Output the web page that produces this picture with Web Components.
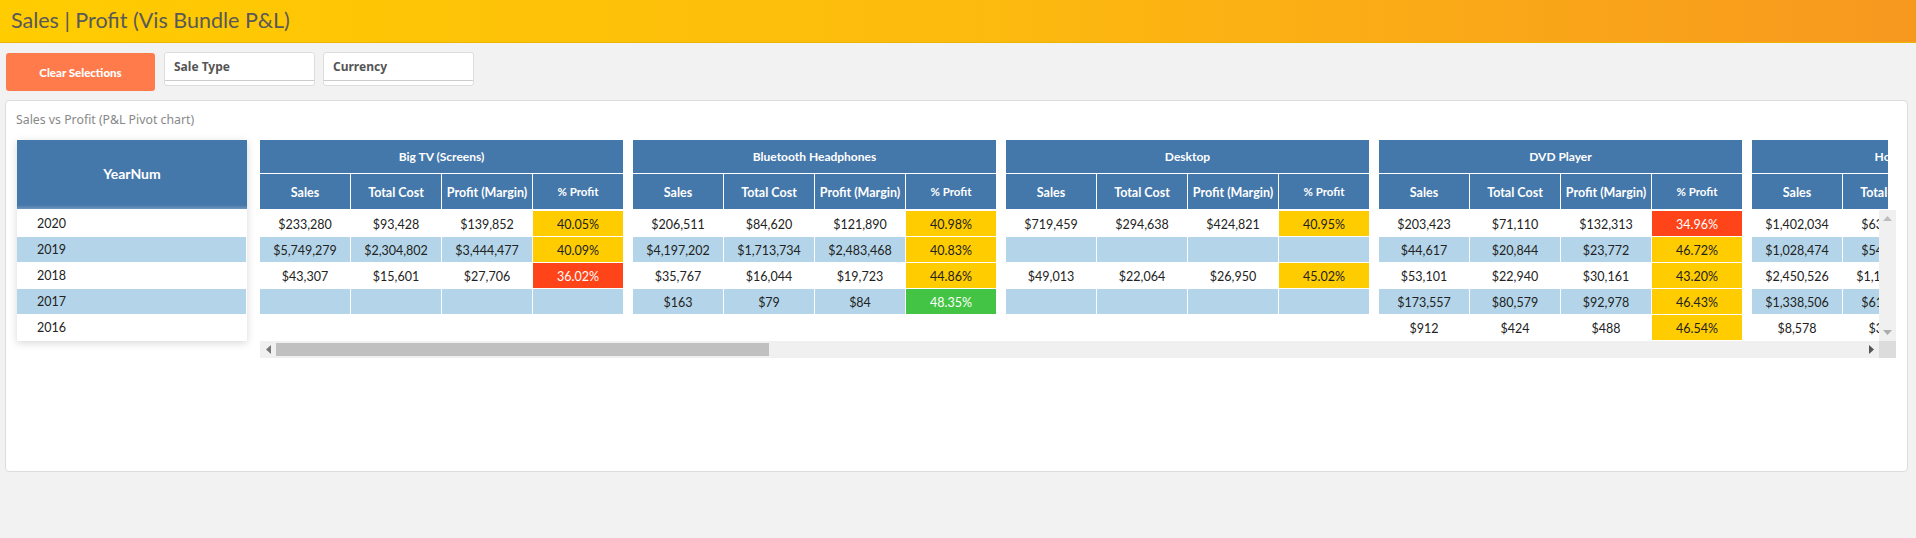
<!DOCTYPE html>
<html>
<head>
<meta charset="utf-8">
<title>Sales | Profit</title>
<style>
    html, body { margin: 0; padding: 0; }
    body { background: #f2f2f2; height: 538px; overflow: hidden; font-family: "Noto Sans", sans-serif; }
</style>
</head>
<body>
<app-header>Sales | Profit (Vis Bundle P&amp;L)</app-header>
<tool-bar>
    <clear-button>Clear Selections</clear-button>
    <filter-box>Sale Type</filter-box>
    <filter-box>Currency</filter-box>
</tool-bar>
<chart-panel heading="Sales vs Profit (P&amp;L Pivot chart)">
    <pivot-chart></pivot-chart>
</chart-panel>

<script>
class AppHeader extends HTMLElement {
    constructor() {
        super();
        this.attachShadow({mode: 'open'}).innerHTML = `
            <style>
                :host {
                    display: flex;
                    align-items: center;
                    height: 43px;
                    box-sizing: border-box;
                    padding: 0 0 3px 11px;
                    background: linear-gradient(90deg, #ffcc00 0%, #fdbb0e 50%, #f7981f 100%);
                    border-bottom: 1px solid #eeb400;
                    color: #595959;
                    font: 400 21.5px Lato, sans-serif;
                }
            </style>
            <slot></slot>`;
    }
}
customElements.define('app-header', AppHeader);

class ToolBar extends HTMLElement {
    constructor() {
        super();
        this.attachShadow({mode: 'open'}).innerHTML = `
            <style>
                :host {
                    display: flex;
                    align-items: flex-start;
                    gap: 8px;
                    height: 57px;
                    box-sizing: border-box;
                    padding: 9px 0 0 6px;
                }
            </style>
            <slot></slot>`;
    }
}
customElements.define('tool-bar', ToolBar);

class ClearButton extends HTMLElement {
    constructor() {
        super();
        this.attachShadow({mode: 'open'}).innerHTML = `
            <style>
                :host {
                    display: flex;
                    align-items: center;
                    justify-content: center;
                    width: 149px;
                    height: 38px;
                    margin: 1px 1px 0 0;
                    background: #ff7b4c;
                    border-radius: 3px;
                    color: #fff;
                    font: 900 11.5px Lato, sans-serif;
                }
            </style>
            <slot></slot>`;
    }
}
customElements.define('clear-button', ClearButton);

class FilterBox extends HTMLElement {
    constructor() {
        super();
        this.attachShadow({mode: 'open'}).innerHTML = `
            <style>
                :host {
                    display: block;
                    width: 151px;
                    height: 34px;
                    box-sizing: border-box;
                    background: #fff;
                    border: 1px solid #ddd;
                    border-radius: 3px;
                }
                .label {
                    height: 28px;
                    box-sizing: border-box;
                    padding: 5px 0 0 9px;
                    border-bottom: 1px solid #ccc;
                    color: #555;
                    font: 700 12px "Noto Sans", sans-serif;
                }
            </style>
            <div class="label"><slot></slot></div>`;
    }
}
customElements.define('filter-box', FilterBox);

class ChartPanel extends HTMLElement {
    constructor() {
        super();
        this.attachShadow({mode: 'open'}).innerHTML = `
            <style>
                :host {
                    display: block;
                    width: 1903px;
                    height: 372px;
                    margin-left: 5px;
                    box-sizing: border-box;
                    padding: 0 10px 0 11px;
                    background: #fff;
                    border: 1px solid #ddd;
                    border-radius: 4px;
                }
                .heading {
                    height: 39px;
                    box-sizing: border-box;
                    padding-top: 10px;
                    margin-left: -1px;
                    color: #888;
                    font: 400 12.3px "Noto Sans", sans-serif;
                }
            </style>
            <div class="heading"></div>
            <slot></slot>`;
        this.shadowRoot.querySelector('.heading').textContent = this.getAttribute('heading');
    }
}
customElements.define('chart-panel', ChartPanel);

const pivotData = [
    {name: 'Big TV (Screens)', rows: [
        ['$233,280', '$93,428', '$139,852', '40.05%', 'y'],
        ['$5,749,279', '$2,304,802', '$3,444,477', '40.09%', 'y'],
        ['$43,307', '$15,601', '$27,706', '36.02%', 'r'],
        ['', '', '', ''],
        null
    ]},
    {name: 'Bluetooth Headphones', rows: [
        ['$206,511', '$84,620', '$121,890', '40.98%', 'y'],
        ['$4,197,202', '$1,713,734', '$2,483,468', '40.83%', 'y'],
        ['$35,767', '$16,044', '$19,723', '44.86%', 'y'],
        ['$163', '$79', '$84', '48.35%', 'g'],
        null
    ]},
    {name: 'Desktop', rows: [
        ['$719,459', '$294,638', '$424,821', '40.95%', 'y'],
        ['', '', '', ''],
        ['$49,013', '$22,064', '$26,950', '45.02%', 'y'],
        ['', '', '', ''],
        null
    ]},
    {name: 'DVD Player', rows: [
        ['$203,423', '$71,110', '$132,313', '34.96%', 'r'],
        ['$44,617', '$20,844', '$23,772', '46.72%', 'y'],
        ['$53,101', '$22,940', '$30,161', '43.20%', 'y'],
        ['$173,557', '$80,579', '$92,978', '46.43%', 'y'],
        ['$912', '$424', '$488', '46.54%', 'y']
    ]},
    {name: 'Home Theater System', rows: [
        ['$1,402,034', '$638,000', '', ''],
        ['$1,028,474', '$548,000', '', ''],
        ['$2,450,526', '$1,130,000', '', ''],
        ['$1,338,506', '$618,000', '', ''],
        ['$8,578', '$3,900', '', '']
    ]}
];

class PivotGroup extends HTMLElement {
    constructor() {
        super();
        this.attachShadow({mode: 'open'}).innerHTML = `
            <style>
                :host {
                    display: block;
                    flex: none;
                    width: 363px;
                    font-family: Lato, sans-serif;
                }
                .title {
                    display: flex;
                    align-items: center;
                    justify-content: center;
                    height: 33px;
                    margin-bottom: 1px;
                    background: #4477aa;
                    color: #fff;
                    font-size: 12px;
                    font-weight: 700;
                    white-space: nowrap;
                }
                .cols {
                    display: grid;
                    grid-template-columns: repeat(4, 90px);
                    gap: 1px;
                }
                .cols div {
                    display: flex;
                    align-items: center;
                    justify-content: center;
                    box-sizing: border-box;
                    height: 35px;
                    padding-top: 1px;
                    background: #4477aa;
                    color: #fff;
                    font-size: 12.5px;
                    font-weight: 700;
                    white-space: nowrap;
                }
                .cols div.pct {
                    font-size: 11.5px;
                    padding: 0 0 1px;
                }
            </style>
            <div class="title"></div>
            <div class="cols">
                <div>Sales</div>
                <div>Total Cost</div>
                <div>Profit (Margin)</div>
                <div class="pct">% Profit</div>
            </div>`;
    }
    set name(v) {
        this.shadowRoot.querySelector('.title').textContent = v;
    }
}
customElements.define('pivot-group', PivotGroup);

class PivotRows extends HTMLElement {
    constructor() {
        super();
        this.attachShadow({mode: 'open'}).innerHTML = `
            <style>
                :host {
                    display: grid;
                    flex: none;
                    grid-template-columns: repeat(4, 90px);
                    grid-auto-rows: 25px;
                    gap: 1px;
                    width: 363px;
                    font: 400 12.5px Lato, sans-serif;
                    color: #222;
                }
                div {
                    display: flex;
                    align-items: center;
                    justify-content: center;
                    padding-top: 1px;
                    box-sizing: border-box;
                    white-space: nowrap;
                }
                .alt { background: #b4d5e9; }
                .y { background: #ffcc00; }
                .r { background: #ff4419; color: #fff; }
                .g { background: #44c444; color: #fff; }
            </style>`;
    }
    set rows(list) {
        let html = '';
        list.forEach((row, i) => {
            const alt = i % 2 == 1;
            if (!row) {
                html += '<div></div><div></div><div></div><div></div>';
                return;
            }
            for (let c = 0; c < 4; c++) {
                let cls = alt ? 'alt' : '';
                if (c == 3 && row[4]) cls = row[4];
                html += `<div class="${cls}">${row[c]}</div>`;
            }
        });
        this.shadowRoot.innerHTML += html;
    }
}
customElements.define('pivot-rows', PivotRows);

class YearColumn extends HTMLElement {
    constructor() {
        super();
        this.attachShadow({mode: 'open'}).innerHTML = `
            <style>
                :host {
                    display: block;
                    flex: none;
                    width: 230px;
                    height: 201px;
                    background: #fff;
                    box-shadow: 0 2px 8px rgba(0, 0, 0, .16);
                    font-family: Lato, sans-serif;
                }
                .head {
                    display: flex;
                    align-items: center;
                    justify-content: center;
                    box-sizing: border-box;
                    height: 69px;
                    padding-bottom: 2px;
                    margin-bottom: 2px;
                    background: linear-gradient(180deg, #4477aa 94%, #7096bd 100%);
                    color: #fff;
                    font-size: 14px;
                    font-weight: 700;
                }
                .year {
                    height: 25px;
                    margin: 0 1px 1px 0;
                    padding-left: 20px;
                    line-height: 26px;
                    color: #222;
                    font-size: 12.5px;
                }
                .alt { background: #b4d5e9; }
            </style>
            <div class="head">YearNum</div>
            <div class="year">2020</div>
            <div class="year alt">2019</div>
            <div class="year">2018</div>
            <div class="year alt">2017</div>
            <div class="year">2016</div>`;
    }
}
customElements.define('year-column', YearColumn);

class PivotChart extends HTMLElement {
    constructor() {
        super();
        this.attachShadow({mode: 'open'}).innerHTML = `
            <style>
                :host {
                    display: flex;
                    gap: 13px;
                    align-items: flex-start;
                }
                .right { width: 1636px; }
                .heads {
                    display: flex;
                    gap: 10px;
                    width: 1628px;
                    overflow: hidden;
                    margin-bottom: 1px;
                }
                .middle {
                    display: flex;
                    height: 131px;
                }
                .bodies {
                    display: flex;
                    gap: 10px;
                    flex: 1;
                    min-width: 0;
                    overflow: hidden;
                    padding-top: 1px;
                }
                .vbar {
                    display: flex;
                    flex: none;
                    flex-direction: column;
                    align-items: center;
                    justify-content: space-between;
                    box-sizing: border-box;
                    width: 17px;
                    padding: 6px 0;
                    background: #f0f0f0;
                }
                .hbar {
                    display: flex;
                    height: 17px;
                    background: #f0f0f0;
                }
                .btn {
                    display: flex;
                    flex: none;
                    align-items: center;
                    justify-content: center;
                    width: 16px;
                }
                .thumb {
                    flex: none;
                    width: 493px;
                    height: 13px;
                    margin-top: 2px;
                    background: #c0c0c0;
                }
                .spacer { flex: 1; }
                .corner { flex: none; width: 17px; background: #dcdcdc; }
                svg { display: block; }
            </style>
            <year-column></year-column>
            <div class="right">
                <div class="heads"></div>
                <div class="middle">
                    <div class="bodies"></div>
                    <div class="vbar">
                        <svg width="9" height="5"><path d="M4.5 0L9 5H0z" fill="#bdbdbd"/></svg>
                        <svg width="9" height="5"><path d="M0 0H9L4.5 5z" fill="#adadad"/></svg>
                    </div>
                </div>
                <div class="hbar">
                    <div class="btn"><svg width="5" height="9"><path d="M5 0V9L0 4.5z" fill="#777"/></svg></div>
                    <div class="thumb"></div>
                    <div class="spacer"></div>
                    <div class="btn"><svg width="5" height="9"><path d="M0 0V9L5 4.5z" fill="#555"/></svg></div>
                    <div class="corner"></div>
                </div>
            </div>`;
        const heads = this.shadowRoot.querySelector('.heads');
        const bodies = this.shadowRoot.querySelector('.bodies');
        pivotData.forEach(d => {
            const g = document.createElement('pivot-group');
            g.name = d.name;
            heads.appendChild(g);
            const r = document.createElement('pivot-rows');
            r.rows = d.rows;
            bodies.appendChild(r);
        });
    }
}
customElements.define('pivot-chart', PivotChart);
</script>
</body>
</html>
